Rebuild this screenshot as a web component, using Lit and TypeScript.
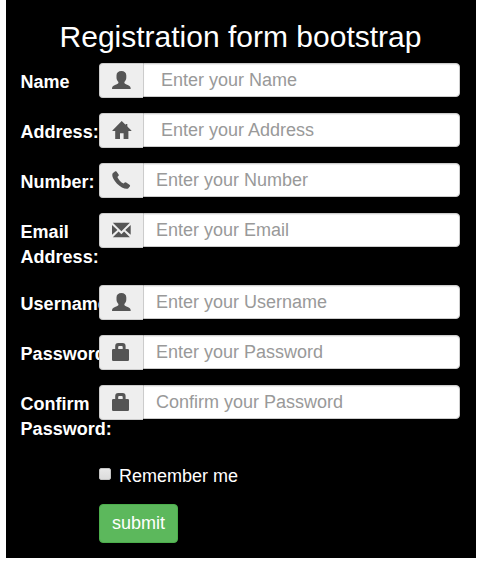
import { LitElement, html, css, svg } from "lit";
import { customElement } from "lit/decorators.js";

const icons = {
  user: svg`<path d="M4.500 4.600C4.500 1.600 6.500 0 9.400 0S14.300 1.600 14.300 4.600V6.600C14.300 8.600 13.500 10 12.400 11V12C12.600 12.800 14 13.200 15.700 13.900C17.900 14.800 18.700 15.600 18.700 18H0C0 15.600.800 14.800 3 13.900C4.700 13.200 6.200 12.800 6.400 12V11C5.300 10 4.500 8.600 4.500 6.600Z"/>`,
  home: svg`<path d="M9.700 0L19.400 9.400V9.900H16.400V18H11.600V12.200H8V18H3.200V9.900H.400V9.400Z"/><path d="M13.600 3H15.300V7H13.600Z"/>`,
  phone: svg`<path d="M1 2L3.300.300Q4 0 4.500.600L6.600 3.600Q7.100 4.400 6.300 5L5.400 5.900C6.200 8.200 8.900 11.300 11.600 12.500L12.700 11.500Q13.400 10.900 14.200 11.400L17.500 13.700Q18.500 14.500 17.800 15.600L16.400 17.300C14.400 19 9 16.700 5 12.700C1 8.500-.900 3.800 1 2Z"/>`,
  mail: svg`<path d="M.8 1.800H17.900L9.400 10.200ZM0 3.900L5.400 9.100L0 13.800ZM18.700 3.900V13.800L13.300 9.100ZM6.600 10.400L9.400 13.200L12.100 10.400L17.900 16.200H.800Z"/>`,
  lock: svg`<path fill-rule="evenodd" d="M3.200 6V3Q3.200 0 6.200 0H10.600Q13.600 0 13.600 3V6H15.800Q17 6 17 7.200V16.800Q17 18 15.800 18H1.200Q0 18 0 16.800V7.200Q0 6 1.200 6ZM6.200 6H10.700V4Q10.700 3 9.700 3H7.200Q6.200 3 6.200 4Z"/>`,
};

const fields: { label: string; icon: keyof typeof icons; hint: string }[] = [
  { label: "Name", icon: "user", hint: " Enter your Name" },
  { label: "Address:", icon: "home", hint: " Enter your Address" },
  { label: "Number:", icon: "phone", hint: "Enter your Number" },
  { label: "Email Address:", icon: "mail", hint: "Enter your Email" },
  { label: "Username:", icon: "user", hint: "Enter your Username" },
  { label: "Password:", icon: "lock", hint: "Enter your Password" },
  { label: "Confirm Password:", icon: "lock", hint: "Confirm your Password" },
];

@customElement("app-root")
export class AppRoot extends LitElement {
  static styles = css`
    :host {
      display: block;
      height: 561px;
      background: #fff;
      overflow: hidden;
      font: 18px/25px "Liberation Sans", Arial, sans-serif;
    }
    * { box-sizing: border-box; }
    .panel {
      margin: 0 5px 0 6px;
      height: 558px;
      padding: 20px 16px 0 15px;
      background: #000;
      color: #fff;
    }
    .title {
      margin: 0 0 10px;
      font-size: 30px;
      line-height: 33px;
      font-weight: 400;
      text-align: center;
    }
    .row {
      display: grid;
      grid-template-columns: 78px minmax(0, 1fr);
      align-items: start;
      margin-bottom: 15px;
    }
    .label { padding-top: 7px; margin-left: -0.4px; font-weight: 700; width: 78px; }
    .group { display: flex; height: 35px; position: relative; }
    .addon {
      width: 44px;
      height: 35px;
      padding: 8px 0 0 12px;
      background: #eee;
      border: 1px solid #ccc;
      border-right: 0;
      border-radius: 4px 0 0 4px;
    }
    .icon { display: block; width: 20px; height: 18px; fill: #555; margin-top: -1px; }
    .input {
      flex: 1;
      min-width: 0;
      height: 34px;
      margin: 0;
      padding: 6px 12px;
      font: inherit;
      background: #fff;
      border: 1px solid #ccc;
      border-radius: 0 4px 4px 0;
      box-shadow: inset 0 1px 1px rgba(0, 0, 0, 0.075);
      outline: 0;
    }
    .input::placeholder { color: #999; opacity: 1; }
    .remember {
      grid-column: 2;
      display: flex;
      padding-top: 7px;
    }
    .check {
      appearance: none;
      width: 12px;
      height: 12px;
      margin: 4px 8px 0 0;
      border: 1px solid #c4c4c4;
      border-radius: 2px;
      background: linear-gradient(#e8e8e8, #dcdcdc);
    }
    .submit {
      grid-column: 2;
      justify-self: start;
      width: 79px;
      height: 39px;
      padding: 0;
      font: inherit;
      color: #fff;
      background: #5cb85c;
      border: 1px solid #4cae4c;
      border-radius: 4px;
    }
  `;

  render() {
    return html`<form class="panel">
      <h2 class="title">Registration form bootstrap</h2>
      ${fields.map(
        (f, i) => html`<div class="row">
          <label class="label" for="field-${i}">${f.label}</label>
          <div class="group">
            <span class="addon"><svg class="icon" viewBox="0 0 20 18">${icons[f.icon]}</svg></span>
            <input class="input" id="field-${i}" placeholder=${f.hint} />
          </div>
        </div>`
      )}
      <div class="row">
        <label class="remember"><input class="check" type="checkbox" />Remember me</label>
      </div>
      <div class="row"><button class="submit" type="button">submit</button></div>
    </form>`;
  }
}
